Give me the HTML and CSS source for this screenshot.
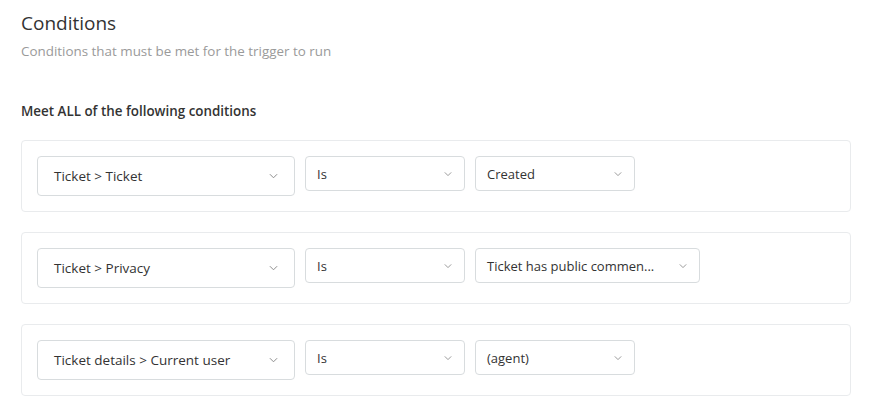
FILE: index.html
```html
<!DOCTYPE html>
<html>
<head>
<meta charset="utf-8">
<link rel="stylesheet" href="styles.css">
</head>
<body>
<div class="page">
  <h1 class="title">Conditions</h1>
  <p class="subtitle">Conditions that must be met for the trigger to run</p>
  <h2 class="group-label">Meet ALL of the following conditions</h2>
  <div class="conditions">
    <div class="card">
      <div class="select select-field"><span>Ticket &gt; Ticket</span><svg class="chev" viewBox="0 0 10 6"><path d="M1 1l4 4 4-4"/></svg></div>
      <div class="select select-op"><span>Is</span><svg class="chev" viewBox="0 0 10 6"><path d="M1 1l4 4 4-4"/></svg></div>
      <div class="select select-val"><span>Created</span><svg class="chev" viewBox="0 0 10 6"><path d="M1 1l4 4 4-4"/></svg></div>
    </div>
    <div class="card">
      <div class="select select-field"><span>Ticket &gt; Privacy</span><svg class="chev" viewBox="0 0 10 6"><path d="M1 1l4 4 4-4"/></svg></div>
      <div class="select select-op"><span>Is</span><svg class="chev" viewBox="0 0 10 6"><path d="M1 1l4 4 4-4"/></svg></div>
      <div class="select select-val select-wide"><span>Ticket has public commen...</span><svg class="chev" viewBox="0 0 10 6"><path d="M1 1l4 4 4-4"/></svg></div>
    </div>
    <div class="card">
      <div class="select select-field"><span>Ticket details &gt; Current user</span><svg class="chev" viewBox="0 0 10 6"><path d="M1 1l4 4 4-4"/></svg></div>
      <div class="select select-op"><span>Is</span><svg class="chev" viewBox="0 0 10 6"><path d="M1 1l4 4 4-4"/></svg></div>
      <div class="select select-val"><span>(agent)</span><svg class="chev" viewBox="0 0 10 6"><path d="M1 1l4 4 4-4"/></svg></div>
    </div>
  </div>
</div>
</body>
</html>
```
FILE: styles.css
```css
* { box-sizing: border-box; }
html, body { margin: 0; padding: 0; background: #fff; }
body {
  font-family: "Open Sans", "Noto Sans", sans-serif;
  color: #2f3941;
}
.page {
  padding: 11px 25px 0 21px;
}
.title {
  margin: 0;
  font-size: 19px;
  line-height: 24px;
  font-weight: 400;
  color: #333;
}
.subtitle {
  margin: 7px 0 0;
  font-size: 13.4px;
  line-height: 18px;
  color: #9a9a9a;
}
.group-label {
  margin: 42px 0 0;
  font-size: 13.4px;
  line-height: 18px;
  font-weight: 600;
  color: #333;
}
.conditions {
  margin-top: 20px;
  display: flex;
  flex-direction: column;
  gap: 20px;
}
.card {
  border: 1px solid #e9ebed;
  border-radius: 4px;
  padding: 15px;
  display: flex;
  align-items: flex-start;
  gap: 10px;
  height: 72px;
}
.select {
  display: flex;
  align-items: center;
  justify-content: space-between;
  border: 1px solid #d8dcde;
  border-radius: 4px;
  font-size: 13px;
  color: #333;
  background: #fff;
}
.select-field {
  width: 258px;
  height: 40px;
  padding: 0 16px 0 16px;
  font-size: 13.5px;
}
.select-op, .select-val {
  width: 160px;
  height: 35px;
  padding: 0 12px 0 11px;
}
.select-wide {
  width: 225px;
}
.chev {
  width: 9px;
  height: 6px;
  fill: none;
  stroke: #8c8c8c;
  stroke-width: 1.1;
  flex: none;
}
.select-op .chev, .select-val .chev { width: 8px; }
```
